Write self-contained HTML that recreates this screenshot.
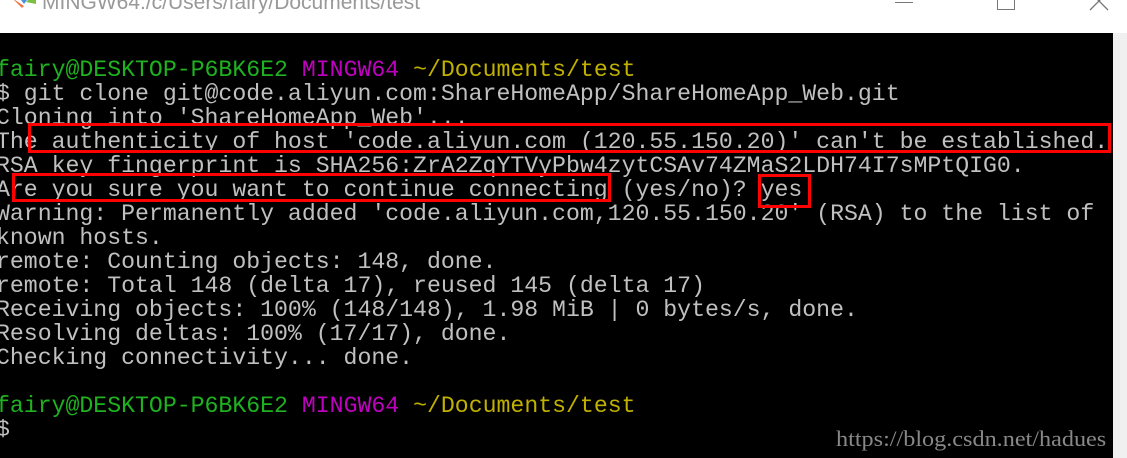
<!DOCTYPE html>
<html><head><meta charset="utf-8"><style>
body{margin:0;width:1127px;height:458px;overflow:hidden;background:#fff;position:relative;font-family:"Liberation Sans",sans-serif}
#title{position:absolute;left:42px;top:-9px;font-size:21px;color:#999;}
#term{position:absolute;left:0;top:33px;width:1113px;height:425px;background:#000;overflow:hidden}
#sb{position:absolute;left:1113px;top:33px;width:14px;height:425px;background:#f0f0f0}
pre{margin:0;position:absolute;left:-4px;top:25px;font-family:"Liberation Mono",monospace;font-size:22.9px;line-height:24px;color:#c0c0c0;transform:scaleX(1.012);transform-origin:0 0}
.g{color:#1fb21f}.m{color:#c000c0}.y{color:#c0b000}
.box{position:absolute;border:3px solid #f00;box-sizing:border-box}
#wm{position:absolute;left:836px;top:426px;font-family:"Liberation Serif",serif;font-size:22px;color:#888;transform:scaleX(1.1);transform-origin:0 0;white-space:nowrap}
.ic{position:absolute;background:#777}
</style></head><body>
<svg style="position:absolute;left:10px;top:-6px" width="28" height="16"><path d="M2 4 L12 14 L14 12 Z" fill="#e74"/><path d="M8 2 L20 2 L14 10 Z" fill="#4a90e2"/><path d="M16 8 L26 -2 L26 10 Z" fill="#7bc043"/></svg>
<div id="title">MINGW64:/c/Users/fairy/Documents/test</div>
<div class="ic" style="left:895px;top:2px;width:18px;height:1px"></div>
<div style="position:absolute;left:997px;top:-6px;width:18px;height:16px;border:1px solid #777;box-sizing:border-box"></div>
<svg style="position:absolute;left:1088px;top:-8px" width="22" height="20"><path d="M2 0 L20 18 M20 0 L2 18" stroke="#777" stroke-width="1.3"/></svg>
<div id="term"><pre><span class="g">fairy@DESKTOP-P6BK6E2</span> <span class="m">MINGW64</span> <span class="y">~/Documents/test</span>
$ git clone git@code.aliyun.com:ShareHomeApp/ShareHomeApp_Web.git
Cloning into 'ShareHomeApp_Web'...
The authenticity of host 'code.aliyun.com (120.55.150.20)' can't be established.
RSA key fingerprint is SHA256:ZrA2ZqYTVyPbw4zytCSAv74ZMaS2LDH74I7sMPtQIG0.
Are you sure you want to continue connecting (yes/no)? yes
Warning: Permanently added 'code.aliyun.com,120.55.150.20' (RSA) to the list of
known hosts.
remote: Counting objects: 148, done.
remote: Total 148 (delta 17), reused 145 (delta 17)
Receiving objects: 100% (148/148), 1.98 MiB | 0 bytes/s, done.
Resolving deltas: 100% (17/17), done.
Checking connectivity... done.

<span class="g">fairy@DESKTOP-P6BK6E2</span> <span class="m">MINGW64</span> <span class="y">~/Documents/test</span>
$</pre></div>
<div id="sb"></div>
<div class="box" style="left:28px;top:123px;width:1083px;height:30px"></div>
<div class="box" style="left:12px;top:173px;width:599px;height:29px"></div>
<div class="box" style="left:758px;top:174px;width:53px;height:34px"></div>
<div id="wm">https://blog.csdn.net/hadues</div>
</body></html>
